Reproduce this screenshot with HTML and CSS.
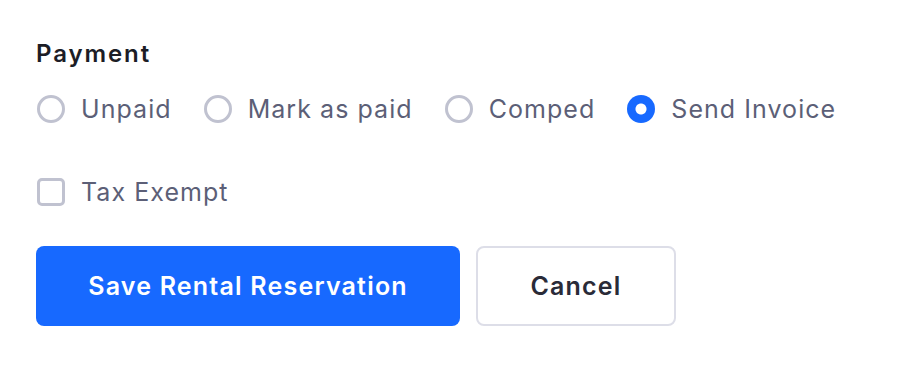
FILE: index.html
```html
<html>
<head>
    <meta name="viewport" content="width=device-width, initial-scale=1.0">
    <link rel="stylesheet" href="styles.css">
</head>
<body>
    <form class="payment-form" onsubmit="return false;">
        <h2 class="section-title">Payment</h2>

        <div class="radio-group">
            <label class="option">
                <input type="radio" name="payment" value="unpaid">
                <span>Unpaid</span>
            </label>
            <label class="option">
                <input type="radio" name="payment" value="paid">
                <span>Mark as paid</span>
            </label>
            <label class="option">
                <input type="radio" name="payment" value="comped">
                <span>Comped</span>
            </label>
            <label class="option">
                <input type="radio" name="payment" value="invoice" checked>
                <span>Send Invoice</span>
            </label>
        </div>

        <div class="checkbox-row">
            <label class="option">
                <input type="checkbox" name="tax_exempt">
                <span>Tax Exempt</span>
            </label>
        </div>

        <div class="actions">
            <button type="submit" class="btn btn-primary">Save Rental Reservation</button>
            <button type="button" class="btn btn-secondary">Cancel</button>
        </div>
    </form>
</body>
</html>
```

FILE: styles.css
```css
* {
    margin: 0;
    padding: 0;
    box-sizing: border-box;
}

body {
    background: white;
    font-family: Inter, "Noto Sans", sans-serif;
}

.payment-form {
    display: flex;
    flex-direction: column;
    align-items: flex-start;
    padding: 39px 0 0 36px;
}

.section-title {
    font-size: 24px;
    font-weight: 600;
    line-height: 30px;
    letter-spacing: 1.9px;
    color: #1c1d26;
}

.radio-group {
    display: flex;
    gap: 31px;
    margin-top: 25px;
}

.option {
    display: flex;
    align-items: center;
    gap: 16px;
    height: 30px;
    font-size: 25px;
    letter-spacing: 1.05px;
    color: #5c5f77;
    cursor: pointer;
}

.option input {
    -webkit-appearance: none;
    appearance: none;
    width: 28px;
    height: 28px;
    border: 3px solid #c0c2d0;
    border-radius: 50%;
    background: white;
    flex-shrink: 0;
    margin-left: 1px;
}

.option input:checked {
    border: none;
    background: radial-gradient(circle, white 0 5px, #1769ff 6px);
}

.option input[type="checkbox"] {
    border-radius: 5px;
}

.checkbox-row {
    margin-top: 53px;
}

.actions {
    display: flex;
    gap: 16px;
    margin-top: 39px;
}

.btn {
    height: 80px;
    border-radius: 8px;
    font-family: Inter, "Noto Sans", sans-serif;
    font-size: 25px;
    font-weight: 600;
    letter-spacing: 1.2px;
    cursor: pointer;
}

.btn-primary {
    width: 424px;
    background: #1769ff;
    border: none;
    color: white;
}

.btn-secondary {
    width: 200px;
    background: white;
    border: 2px solid #dddee8;
    color: #2a2b38;
}
```
